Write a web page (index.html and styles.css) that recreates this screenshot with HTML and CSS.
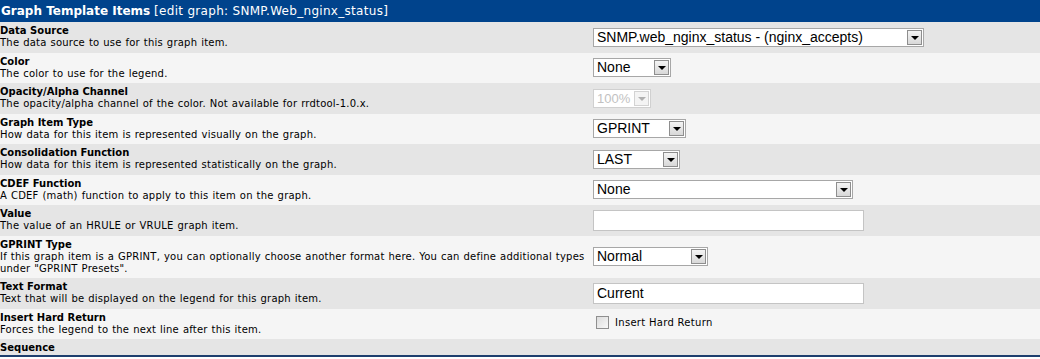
FILE: index.html
```html
<!DOCTYPE html>
<html lang="en">
<head>
    <meta charset="UTF-8">
    <title>Graph Template Items</title>
    <link rel="stylesheet" href="styles.css">
</head>
<body>

<table class="form">
    <tr class="hdr">
        <td colspan="2"><strong>Graph Template Items</strong> <span class="sub">[edit graph: SNMP.Web_nginx_status]</span></td>
    </tr>

    <tr class="dark">
        <td class="lbl"><div class="ttl">Data Source</div><div class="desc">The data source to use for this graph item.</div></td>
        <td class="fld">
            <span class="sel w-ds"><select><option>SNMP.web_nginx_status - (nginx_accepts)</option></select><span class="btn"></span></span>
        </td>
    </tr>
    <tr class="light">
        <td class="lbl"><div class="ttl">Color</div><div class="desc">The color to use for the legend.</div></td>
        <td class="fld">
            <span class="sel w-color"><select><option>None</option></select><span class="btn"></span></span>
        </td>
    </tr>
    <tr class="dark">
        <td class="lbl"><div class="ttl">Opacity/Alpha Channel</div><div class="desc">The opacity/alpha channel of the color. Not available for rrdtool-1.0.x.</div></td>
        <td class="fld">
            <span class="sel w-alpha off"><select disabled><option>100%</option></select><span class="btn"></span></span>
        </td>
    </tr>
    <tr class="light">
        <td class="lbl"><div class="ttl">Graph Item Type</div><div class="desc">How data for this item is represented visually on the graph.</div></td>
        <td class="fld">
            <span class="sel w-type"><select><option>GPRINT</option></select><span class="btn"></span></span>
        </td>
    </tr>
    <tr class="dark">
        <td class="lbl"><div class="ttl">Consolidation Function</div><div class="desc">How data for this item is represented statistically on the graph.</div></td>
        <td class="fld">
            <span class="sel w-cf"><select><option>LAST</option></select><span class="btn"></span></span>
        </td>
    </tr>
    <tr class="light">
        <td class="lbl"><div class="ttl">CDEF Function</div><div class="desc">A CDEF (math) function to apply to this item on the graph.</div></td>
        <td class="fld">
            <span class="sel w-cdef"><select><option>None</option></select><span class="btn"></span></span>
        </td>
    </tr>
    <tr class="dark">
        <td class="lbl"><div class="ttl">Value</div><div class="desc">The value of an HRULE or VRULE graph item.</div></td>
        <td class="fld"><input type="text" class="txt" value=""></td>
    </tr>
    <tr class="light">
        <td class="lbl"><div class="ttl">GPRINT Type</div><div class="desc">If this graph item is a GPRINT, you can optionally choose another format here. You can define additional types under "GPRINT Presets".</div></td>
        <td class="fld">
            <span class="sel w-gprint"><select><option>Normal</option></select><span class="btn"></span></span>
        </td>
    </tr>
    <tr class="dark">
        <td class="lbl"><div class="ttl">Text Format</div><div class="desc">Text that will be displayed on the legend for this graph item.</div></td>
        <td class="fld"><input type="text" class="txt" value="Current"></td>
    </tr>
    <tr class="light">
        <td class="lbl"><div class="ttl">Insert Hard Return</div><div class="desc">Forces the legend to the next line after this item.</div></td>
        <td class="fld">
            <label class="chk"><input type="checkbox"> Insert Hard Return</label>
        </td>
    </tr>
    <tr class="dark last">
        <td class="lbl"><div class="ttl">Sequence</div></td>
        <td class="fld"></td>
    </tr>
</table>

</body>
</html>
```

FILE: styles.css
```css
body {
    margin: 0;
    background: #fff;
    font-family: "DejaVu Sans", Verdana, sans-serif;
    font-size: 10px;
    color: #000;
}
.form {
    width: 1100px;
    border-collapse: collapse;
    border-spacing: 0;
}
.form td {
    padding: 0;
    vertical-align: middle;
}
.hdr td {
    background: #00438c;
    color: #fff;
    font-size: 12px;
    height: 22px;
    padding-left: 1px;
    line-height: 16px;
}
.hdr .sub {
    letter-spacing: 0.3px;
}
.dark {
    background: #e5e5e5;
}
.light {
    background: #f5f5f5;
}
.lbl {
    width: 590px;
    padding: 3px 0 3.5px 0 !important;
    line-height: 12px;
}
.ttl {
    font-weight: bold;
}
.desc {
    letter-spacing: 0.22px;
    word-spacing: 0.5px;
    margin-right: -12px;
}
.fld {
    padding-left: 3px !important;
}
.last td {
    padding-bottom: 1px !important;
    border-bottom: 2px solid #1e3f6e;
}

/* windows-ish dropdowns */
.sel {
    display: inline-flex;
    height: 19px;
    border: 1px solid #a7a7a7;
    background: #fff;
    box-sizing: border-box;
    vertical-align: middle;
}
.sel select {
    flex: 1;
    min-width: 0;
    appearance: none;
    -webkit-appearance: none;
    border: none;
    outline: none;
    background: transparent;
    font-family: "Liberation Sans", Arial, sans-serif;
    font-size: 14px;
    color: #000;
    padding: 0 0 0 3px;
    margin: 0;
    height: 17px;
    line-height: 17px;
}
.sel .btn {
    width: 15px;
    margin: 1px;
    border: 1px solid #8e8e8e;
    box-sizing: border-box;
    background: linear-gradient(#f4f4f4, #d8d8d8);
    display: flex;
    align-items: center;
    justify-content: center;
}
.sel .btn::after {
    content: "";
    border-left: 4px solid transparent;
    border-right: 4px solid transparent;
    border-top: 4px solid #000;
    margin-top: 1px;
}
.sel.off {
    border-color: #d0d0d0;
}
.sel.off select {
    color: #a8a8a8;
    font-size: 13px;
}
.sel.off .btn {
    border-color: #d3d3d3;
    background: #f4f4f4;
}
.sel.off .btn::after {
    border-top-color: #b0b0b0;
}
.w-ds { width: 331px; }
.w-color { width: 78px; }
.w-alpha { width: 58px; }
.w-type { width: 93px; }
.w-cf { width: 87px; }
.w-cdef { width: 260px; }
.w-gprint { width: 115px; }

.txt {
    width: 271px;
    height: 21px;
    box-sizing: border-box;
    border: 1px solid #c4c4c4;
    background: #fff;
    font-family: "Liberation Sans", Arial, sans-serif;
    font-size: 14px;
    padding: 0 3px;
    margin: 0;
    outline: none;
    vertical-align: middle;
}
.chk {
    display: inline-flex;
    align-items: center;
    gap: 6px;
    margin-left: 3px;
    font-size: 10px;
    letter-spacing: 0.3px;
}
.chk input {
    appearance: none;
    -webkit-appearance: none;
    width: 13px;
    height: 13px;
    margin: 0;
    border: 1px solid #8f8f8f;
    background: linear-gradient(135deg, #dcdcdc, #f8f8f8);
}
```
